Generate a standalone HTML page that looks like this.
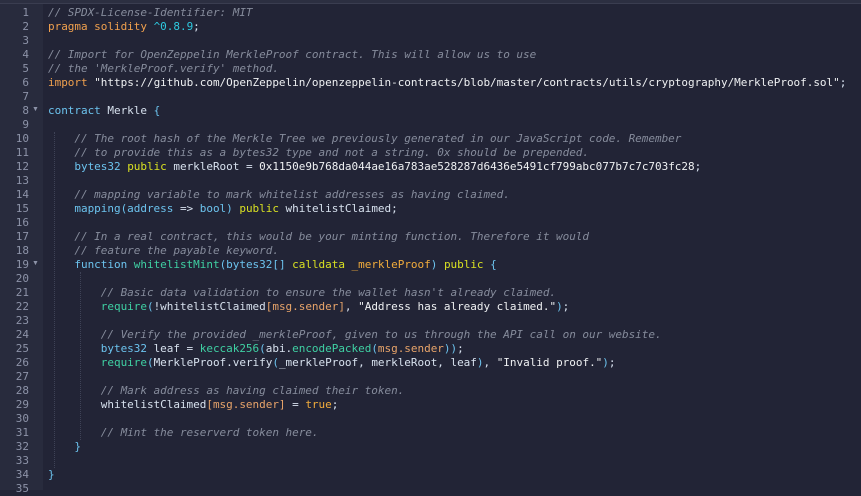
<!DOCTYPE html>
<html><head><meta charset="utf-8"><style>
html,body{margin:0;padding:0;width:861px;height:490px;overflow:hidden;background:#222436;}
#g{position:absolute;left:0;top:0;width:43px;height:490px;background:#282b3d;}
#top{position:absolute;left:0;top:0;width:861px;height:3px;background:#2c2f41;}
#top2{position:absolute;left:0;top:3px;width:861px;height:1px;background:#3a3d50;}
.ln{position:absolute;left:0;width:29px;text-align:right;color:#8d93a8;}
.fold{position:absolute;left:32px;color:#8d93a8;font-size:7px;}
pre{position:absolute;left:48px;top:6px;margin:0;letter-spacing:-0.025px;}
pre,.ln{font-family:"DejaVu Sans Mono","Liberation Mono",monospace;font-size:11px;line-height:14px;}
pre{color:#d7e1ee;}
.c{color:#868c9c;font-style:italic}
.o{color:#f0a04e}
.n{color:#2ecae0}
.b{color:#6cc3ee}
.y{color:#d8e022}
.gr{color:#3fd0a3}
.s{color:#eef0f2}
.m{color:#e8a46a}
.t{color:#f2ac3c}
.guide{position:absolute;width:0;border-left:1px dotted #3e4256;}
</style></head><body>
<div id="g"></div><div id="top"></div><div id="top2"></div>
<div id="nums"></div>
<div class="guide" style="left:54px;top:132px;height:336px"></div>
<div class="guide" style="left:80px;top:272px;height:168px"></div>
<pre><span class="c">// SPDX-License-Identifier: MIT</span>
<span class="o">pragma solidity</span> <span class="n">^0.8.9</span>;

<span class="c">// Import for OpenZeppelin MerkleProof contract. This will allow us to use</span>
<span class="c">// the 'MerkleProof.verify' method.</span>
<span class="o">import</span> <span class="s">"https://github.com/OpenZeppelin/openzeppelin-contracts/blob/master/contracts/utils/cryptography/MerkleProof.sol"</span>;

<span class="b">contract</span> Merkle <span class="b">{</span>

    <span class="c">// The root hash of the Merkle Tree we previously generated in our JavaScript code. Remember</span>
    <span class="c">// to provide this as a bytes32 type and not a string. 0x should be prepended.</span>
    <span class="b">bytes32</span> <span class="y">public</span> merkleRoot = <span class="s">0x1150e9b768da044ae16a783ae528287d6436e5491cf799abc077b7c7c703fc28</span>;

    <span class="c">// mapping variable to mark whitelist addresses as having claimed.</span>
    <span class="b">mapping(address</span> =&gt; <span class="b">bool)</span> <span class="y">public</span> whitelistClaimed;

    <span class="c">// In a real contract, this would be your minting function. Therefore it would</span>
    <span class="c">// feature the payable keyword.</span>
    <span class="b">function</span> <span class="gr">whitelistMint</span><span class="b">(bytes32[]</span> <span class="y">calldata</span> <span class="t">_merkleProof</span><span class="b">)</span> <span class="y">public</span> <span class="b">{</span>

        <span class="c">// Basic data validation to ensure the wallet hasn't already claimed.</span>
        <span class="gr">require</span><span class="b">(</span>!whitelistClaimed<span class="m">[msg.sender]</span>, <span class="s">"Address has already claimed."</span><span class="b">)</span>;

        <span class="c">// Verify the provided _merkleProof, given to us through the API call on our website.</span>
        <span class="b">bytes32</span> leaf = <span class="gr">keccak256</span><span class="b">(</span>abi.<span class="gr">encodePacked</span><span class="b">(</span><span class="m">msg.sender</span><span class="b">))</span>;
        <span class="gr">require</span><span class="b">(</span>MerkleProof.verify<span class="b">(</span>_merkleProof, merkleRoot, leaf<span class="b">)</span>, <span class="s">"Invalid proof."</span><span class="b">)</span>;

        <span class="c">// Mark address as having claimed their token.</span>
        whitelistClaimed<span class="m">[msg.sender]</span> = <span class="t">true</span>;

        <span class="c">// Mint the reserverd token here.</span>
    <span class="b">}</span>

<span class="b">}</span>
</pre>
<script>
var h='';for(var i=1;i<=35;i++){h+='<div class="ln" style="top:'+(6+(i-1)*14)+'px">'+i+'</div>';}
h+='<div class="fold" style="top:'+(6+7*14+1)+'px">&#9660;</div><div class="fold" style="top:'+(6+18*14+1)+'px">&#9660;</div>';
document.getElementById('nums').innerHTML=h;
</script>
</body></html>
